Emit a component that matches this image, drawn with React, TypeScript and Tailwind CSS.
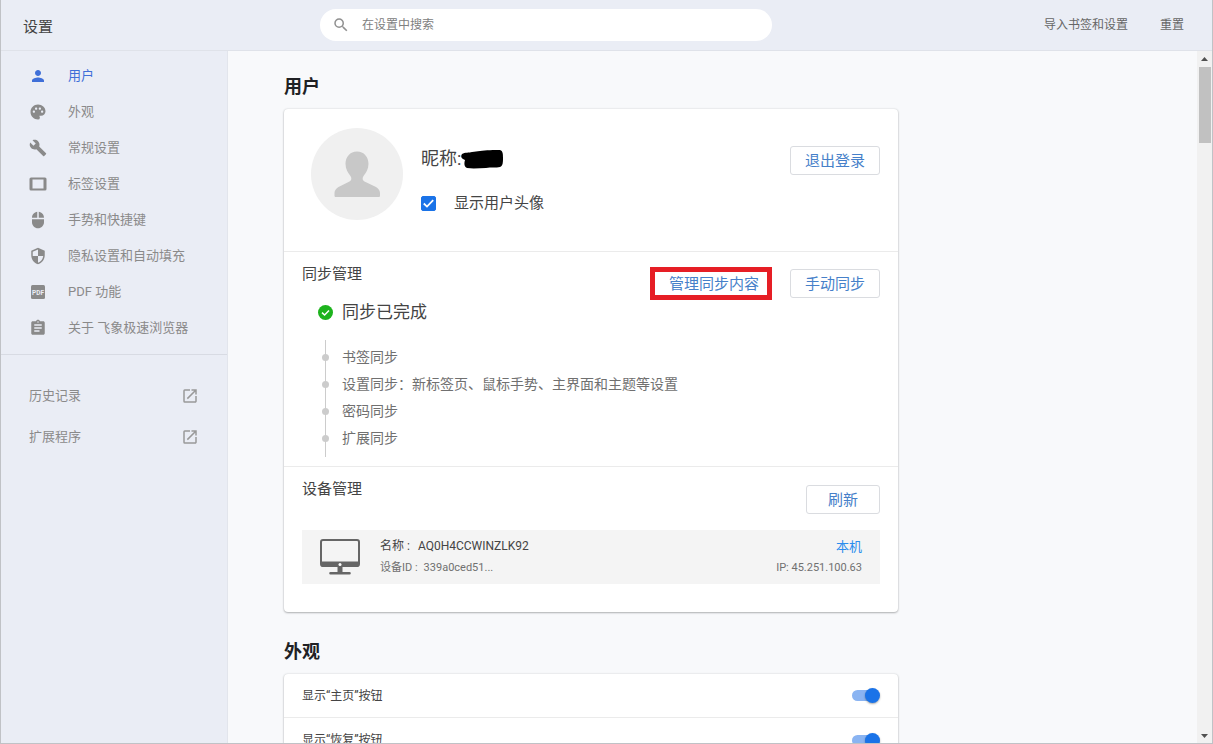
import { useState } from 'react';
import type { ReactNode } from 'react';
import {
  MdAssignment,
  MdBuild,
  MdMouse,
  MdOpenInNew,
  MdPalette,
  MdPerson,
  MdSearch,
  MdSecurity,
} from 'react-icons/md';

function TabIcon({ className }: { className?: string }) {
  return (
    <svg viewBox="0 0 18 18" className={className} aria-hidden="true">
      <path
        fill="currentColor"
        fillRule="evenodd"
        d="M2 2.500h14A1.500 1.500 0 0 1 17.500 4v10a1.500 1.500 0 0 1-1.500 1.500H2A1.500 1.500 0 0 1 .5 14V4A1.500 1.500 0 0 1 2 2.500zM3.500 4.500v9h11v-9z"
      />
    </svg>
  );
}

function PdfIcon({ className }: { className?: string }) {
  return (
    <svg viewBox="0 0 18 18" className={className} aria-hidden="true">
      <rect x="2" y="2" width="14" height="14" rx="1.5" fill="currentColor" />
      <text x="9" y="11.500" textAnchor="middle" fontSize="6.500" fontWeight="700" fill="#eaedf5">
        PDF
      </text>
    </svg>
  );
}

function AvatarIcon() {
  return (
    <svg viewBox="0 0 92 92" className="size-[92px] shrink-0" role="img" aria-label="头像">
      <circle cx="46" cy="46" r="46" fill="#f0f0f0" />
      <path
        d="M46 23.500c7 0 11.500 5.500 11.500 12.500 0 5-2.500 9-5 12-1.500 2.500-1 4.500 1 5.500l11.500 5.500c2.500 1.500 4 3.500 4 6v2.500c0 1-.5 1.500-1.500 1.500h-42.500c-1 0-1.500-.5-1.500-1.500V65c0-2.500 1.500-4.500 4-6L38.500 53.500c2-1 2.500-3 1-5.500-2.500-3-5-7-5-12 0-7 4.500-12.500 11.500-12.500z"
        fill="#c8c8c8"
      />
    </svg>
  );
}

function MonitorIcon() {
  return (
    <svg viewBox="0 0 40 36" className="h-9 w-10 shrink-0" aria-hidden="true">
      <rect x="1" y="1" width="38" height="26" rx="2" fill="none" stroke="#666" strokeWidth="2" />
      <path d="M1 22.500h38V26a2 2 0 0 1-2 2H3a2 2 0 0 1-2-2z" fill="#666" />
      <path d="M17.500 28h5v5h7a1.300 1.300 0 0 1 0 2.600h-19a1.300 1.300 0 0 1 0-2.600h7z" fill="#666" />
      <circle cx="20" cy="25.500" r="1.500" fill="#fff" />
    </svg>
  );
}

const navItems = [
  { icon: MdPerson, label: '用户' },
  { icon: MdPalette, label: '外观' },
  { icon: MdBuild, label: '常规设置' },
  { icon: TabIcon, label: '标签设置' },
  { icon: MdMouse, label: '手势和快捷键' },
  { icon: MdSecurity, label: '隐私设置和自动填充' },
  { icon: PdfIcon, label: 'PDF 功能' },
  { icon: MdAssignment, label: '关于 飞象极速浏览器' },
];

const syncItems = [
  '书签同步',
  '设置同步：新标签页、鼠标手势、主界面和主题等设置',
  '密码同步',
  '扩展同步',
];

function OutlineButton({ children }: { children: ReactNode }) {
  return (
    <button
      type="button"
      className="h-[29px] rounded-[3px] border border-[#dadce0] bg-white px-[14px] text-[15px] leading-5 text-[#4680c9]"
    >
      {children}
    </button>
  );
}

function ToggleRow({ label }: { label: string }) {
  const [on, setOn] = useState(true);
  return (
    <label className="flex h-11 items-center justify-between px-[18px] text-xs text-[#444]">
      {label}
      <span className="relative flex h-[15px] w-7 items-center">
        <input
          type="checkbox"
          role="switch"
          checked={on}
          onChange={(e) => setOn(e.target.checked)}
          className="peer h-[11px] w-[26px] appearance-none rounded-full bg-[#bdc1c6] checked:bg-[#8ab4f2]"
        />
        <span className="pointer-events-none absolute top-0 left-0 size-[15px] rounded-full bg-white shadow-[0_1px_2px_rgba(0,0,0,0.35)] peer-checked:left-[13px] peer-checked:bg-[#1a73e8]" />
      </span>
    </label>
  );
}

function Header() {
  return (
    <header className="flex h-[51px] shrink-0 items-center border-b border-[#dfe2e9] bg-[#eaedf5] pr-7">
      <h1 className="w-[319px] shrink-0 pt-1 pl-[22px] text-[15px] text-[#444]">设置</h1>
      <label className="flex h-8 w-[452px] items-center rounded-full bg-white pl-3">
        <MdSearch className="size-[18px] shrink-0 text-[#909090]" />
        <input
          type="text"
          aria-label="在设置中搜索"
          placeholder="在设置中搜索"
          className="ml-3 min-w-0 flex-1 bg-transparent text-xs text-[#333] outline-none placeholder:text-[#808080]"
        />
      </label>
      <div className="ml-auto flex shrink-0 gap-8 text-xs text-[#666]">
        <button type="button">导入书签和设置</button>
        <button type="button">重置</button>
      </div>
    </header>
  );
}

function Sidebar() {
  return (
    <aside className="w-[227px] shrink-0 border-r border-[#e2e5ec] bg-[#eaedf5] text-[13px] text-[#8a8a8a]">
      <nav className="border-b border-[#d8dbe3] pt-[7px] pb-2">
        {navItems.map(({ icon: Icon, label }, idx) => (
          <a
            key={label}
            href="#"
            className={`flex h-9 items-center pl-7 ${idx === 0 ? 'text-[#3f6fd8]' : ''}`}
          >
            <Icon className="size-[18px] shrink-0" />
            <span className="ml-[21px]">{label}</span>
          </a>
        ))}
      </nav>
      <div className="pt-5">
        {['历史记录', '扩展程序'].map((label) => (
          <a key={label} href="#" className="flex h-[41px] items-center justify-between pr-7 pl-7">
            {label}
            <MdOpenInNew className="size-[18px] text-[#999]" />
          </a>
        ))}
      </div>
    </aside>
  );
}

function UserCard() {
  const [showAvatar, setShowAvatar] = useState(true);
  return (
    <div className="rounded bg-white shadow-[0_1px_2px_rgba(60,64,67,0.35),0_0_2px_rgba(60,64,67,0.2)]">
      <section className="flex items-start border-b border-[#ebebeb] pt-[19px] pr-[18px] pb-[31px] pl-[27px]">
        <AvatarIcon />
        <div className="ml-[18px] flex flex-col gap-[22px] pt-[19px]">
          <div className="flex items-center text-lg leading-6 text-[#444]">
            昵称:
            <svg viewBox="0 0 42 19" className="h-[19px] w-[42px]" aria-hidden="true">
              <path
                d="M1 4c3-2 7-1 10-2 3 0 5-1 8-1C24 0 34 0 39 0c3 1 3 4 3 8s0 8-3 9c-4 1-9 0-14 1-6 0-12 1-19 0-3-1-3-5-2-8C1 9-1 7 1 4z"
                fill="#000"
              />
            </svg>
          </div>
          <label className="flex items-center text-[15px] leading-5 text-[#444]">
            <span className="relative size-[15px]">
              <input
                type="checkbox"
                checked={showAvatar}
                onChange={(e) => setShowAvatar(e.target.checked)}
                className="peer block size-[15px] appearance-none rounded-[2px] border border-[#5f6368] checked:border-[#1a73e8] checked:bg-[#1a73e8]"
              />
              <svg
                viewBox="0 0 15 15"
                className="pointer-events-none absolute inset-0 hidden size-[15px] peer-checked:block"
                aria-hidden="true"
              >
                <path d="M2.800 7.500 6 10.600 12.200 4.200" fill="none" stroke="#fff" strokeWidth="1.800" />
              </svg>
            </span>
            <span className="ml-[18px]">显示用户头像</span>
          </label>
        </div>
        <div className="mt-[18px] ml-auto">
          <OutlineButton>退出登录</OutlineButton>
        </div>
      </section>

      <section className="flex items-start justify-between border-b border-[#ebebeb] px-[18px] pt-3 pb-[9px]">
        <div>
          <h3 className="text-[15px] leading-5 text-[#444]">同步管理</h3>
          <div className="mt-4 ml-4 flex items-center text-[17px] leading-6 text-[#444]">
            <svg viewBox="0 0 15 15" className="mr-[9px] size-[15px]" aria-hidden="true">
              <circle cx="7.500" cy="7.500" r="7.500" fill="#1db31d" />
              <path d="M4 7.600 6.600 10 11 5.500" fill="none" stroke="#fff" strokeWidth="1.500" />
            </svg>
            同步已完成
          </div>
          <ul className="mt-4 ml-[23px] border-l border-[#ccc] pt-1 pb-[5px] text-sm leading-[27px] text-[#707070]">
            {syncItems.map((item) => (
              <li key={item} className="flex items-center">
                <span className="-ml-1 size-[7px] rounded-full bg-[#ccc]" />
                <span className="ml-[13px]">{item}</span>
              </li>
            ))}
          </ul>
        </div>
        <div className="-ml-24 flex shrink-0 items-center gap-[18px] pt-[3px]">
          <button
            type="button"
            className="h-[33px] border-[5px] border-[#e61e25] bg-white pr-2 pl-[14px] text-[15px] leading-5 text-[#4680c9]"
          >
            管理同步内容
          </button>
          <OutlineButton>手动同步</OutlineButton>
        </div>
      </section>

      <section className="px-[18px] pt-3 pb-7">
        <div className="flex items-start justify-between">
          <h3 className="text-[15px] leading-5 text-[#444]">设备管理</h3>
          <button
            type="button"
            className="mt-[6px] h-[29px] rounded-[3px] border border-[#dadce0] bg-white px-[21px] text-[15px] leading-5 text-[#4680c9]"
          >
            刷新
          </button>
        </div>
        <div className="mt-4 flex h-[54px] items-center bg-[#f4f4f4] px-[18px]">
          <MonitorIcon />
          <div className="ml-5">
            <p className="text-xs leading-[21px] text-[#444]">
              名称 :<span className="ml-2">AQ0H4CCWINZLK92</span>
            </p>
            <p className="text-[11px] leading-[21px] text-[#707070]">
              设备ID :<span className="ml-[6px]">339a0ced51...</span>
            </p>
          </div>
          <div className="ml-auto text-right">
            <p className="text-[13px] leading-[21px] text-[#2b8ded]">本机</p>
            <p className="text-[11px] leading-[21px] text-[#707070]">IP: 45.251.100.63</p>
          </div>
        </div>
      </section>
    </div>
  );
}

function Scrollbar() {
  return (
    <div
      className="flex w-[15px] shrink-0 flex-col items-center justify-between bg-[#f1f1f1] pt-[6px] pb-[5px]"
      aria-hidden="true"
    >
      <div className="flex flex-col items-center gap-[6px]">
        <svg viewBox="0 0 7 4" className="h-1 w-[7px]">
          <path d="M0 4 3.500 0 7 4z" fill="#505050" />
        </svg>
        <div className="h-[76px] w-3 bg-[#c1c1c1]" />
      </div>
      <svg viewBox="0 0 7 4" className="h-1 w-[7px]">
        <path d="M0 0 3.500 4 7 0z" fill="#505050" />
      </svg>
    </div>
  );
}

export default function App() {
  return (
    <div className="flex h-screen flex-col overflow-hidden border-x border-b border-[#c0c2c6] bg-[#f8f9fb] font-[Roboto,'Noto_Sans_CJK_SC',sans-serif]">
      <Header />
      <div className="flex min-h-0 flex-1">
        <Sidebar />
        <main className="min-w-0 flex-1 overflow-hidden px-14 pt-[22px]">
          <div className="max-w-[614px]">
            <h2 className="mb-2 text-lg leading-7 font-bold text-[#202124]">用户</h2>
            <UserCard />
            <h2 className="mt-[26px] mb-2 text-lg leading-7 font-bold text-[#202124]">外观</h2>
            <div className="divide-y divide-[#ebebeb] rounded bg-white shadow-[0_1px_2px_rgba(60,64,67,0.35),0_0_2px_rgba(60,64,67,0.2)]">
              <ToggleRow label="显示“主页”按钮" />
              <ToggleRow label="显示“恢复”按钮" />
            </div>
          </div>
        </main>
        <Scrollbar />
      </div>
    </div>
  );
}
